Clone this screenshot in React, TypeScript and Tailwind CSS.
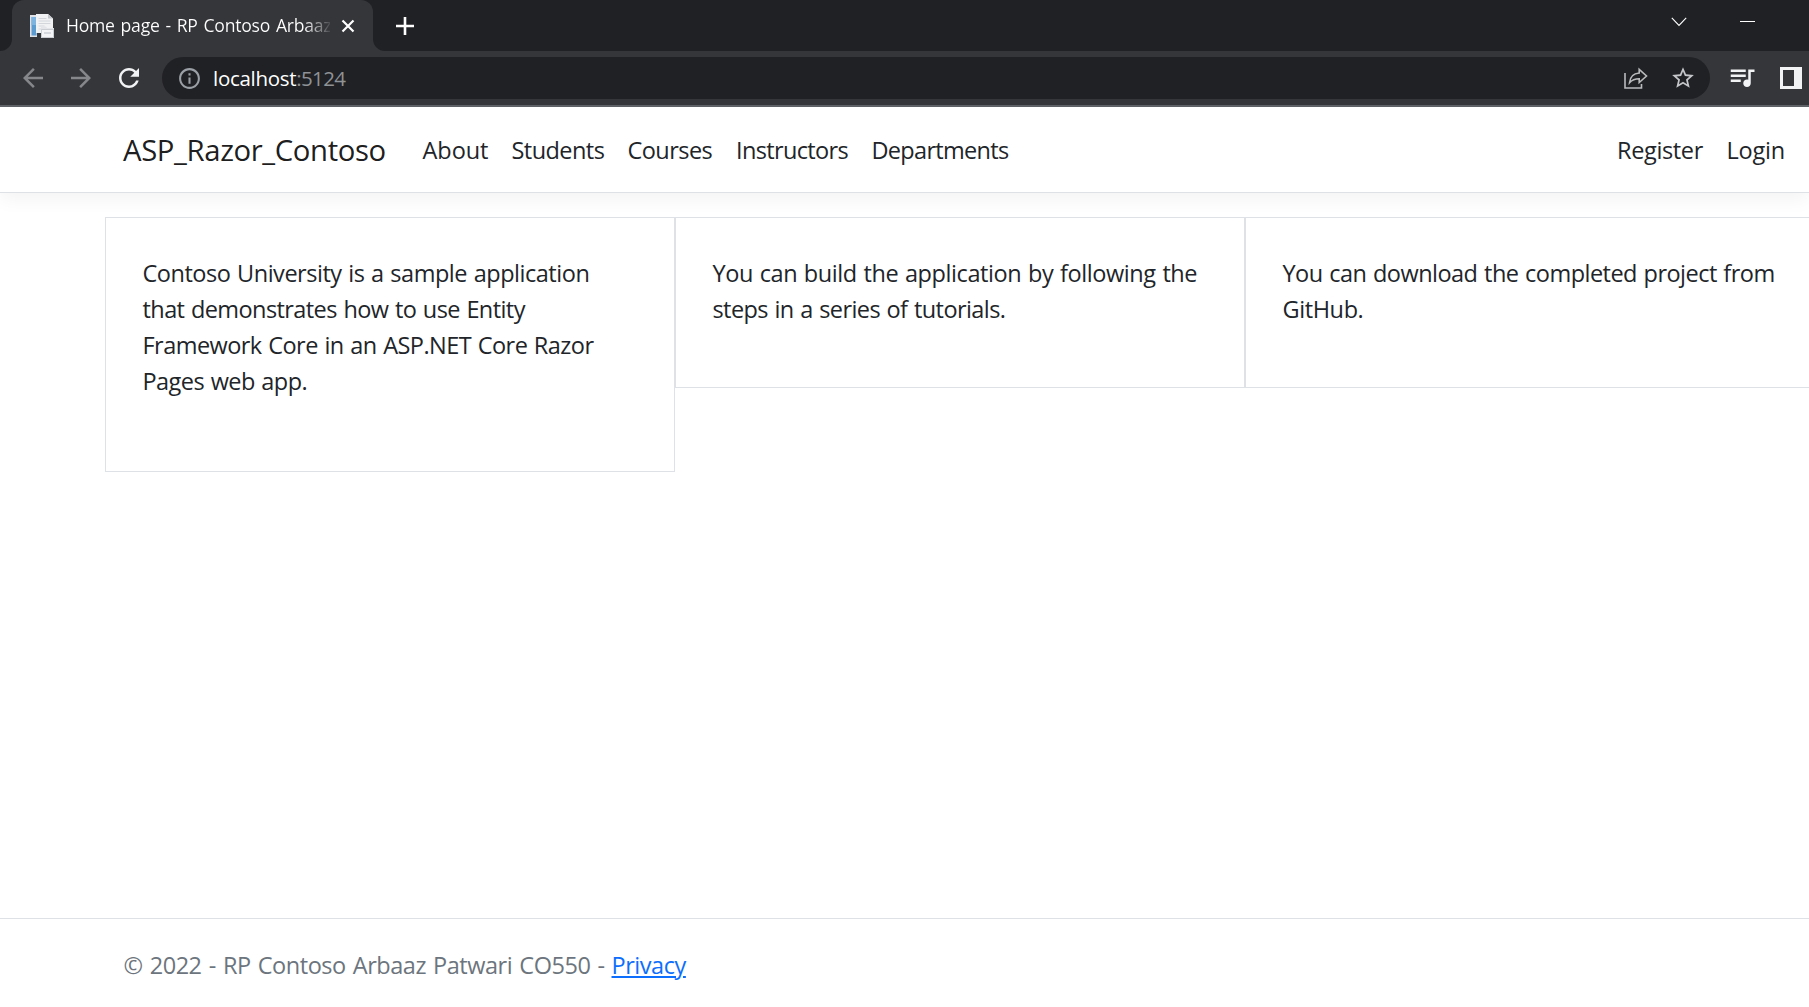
import type { ReactNode } from 'react';

type GlyphProps = { d: string; className: string };

function Glyph({ d, className }: GlyphProps) {
  return (
    <svg viewBox="0 0 24 24" fill="currentColor" className={`shrink-0 ${className}`}>
      <path d={d} />
    </svg>
  );
}

const glyphs = {
  back: 'M20 11H7.83l5.59-5.59L12 4l-8 8 8 8 1.41-1.41L7.83 13H20v-2z',
  forward: 'M12 4l-1.41 1.41L16.17 11H4v2h12.17l-5.58 5.59L12 20l8-8z',
  reload:
    'M17.65 6.35C16.2 4.9 14.21 4 12 4c-4.42 0-7.99 3.58-7.99 8s3.57 8 7.99 8c3.73 0 6.84-2.55 7.73-6h-2.08c-.82 2.33-3.04 4-5.65 4-3.31 0-6-2.69-6-6s2.69-6 6-6c1.66 0 3.14.69 4.22 1.78L13 11h7V4l-2.35 2.35z',
  info: 'M11 7h2v2h-2zm0 4h2v6h-2zm1-9C6.48 2 2 6.48 2 12s4.48 10 10 10 10-4.48 10-10S17.52 2 12 2zm0 18c-4.41 0-8-3.59-8-8s3.59-8 8-8 8 3.59 8 8-3.59 8-8 8z',
  star: 'M22 9.24l-7.19-.62L12 2 9.19 8.63 2 9.24l5.46 4.73L5.82 21 12 17.27 18.18 21l-1.63-7.03L22 9.24zM12 15.4l-3.76 2.27 1-4.28-3.32-2.88 4.38-.38L12 6.1l1.71 4.04 4.38.38-3.32 2.88 1 4.28L12 15.4z',
  queue:
    'M15 6H3v2h12V6zm0 4H3v2h12v-2zM3 16h8v-2H3v2zM17 6v8.18c-.31-.11-.65-.18-1-.18-1.66 0-3 1.34-3 3s1.34 3 3 3 3-1.34 3-3V8h3V6h-5z',
};

function Favicon() {
  return (
    <svg viewBox="0 0 24 24" className="size-6 shrink-0">
      <path d="M0 1h7v22H0z" fill="#dfe3e8" />
      <path d="M1.5 3h5v18.5h-5z" fill="#5b9bd0" />
      <path d="M1.5 3h5v8h-5z" fill="#7db4df" />
      <path d="M6 0h12l5 4.500V19H6z" fill="#f1f2f4" />
      <path d="M18 0l5 4.500h-5z" fill="#c4c7cc" />
      <path d="M8.500 4.500h8M8.500 7h12M8.500 9.500h12M8.500 12h6M8.500 15h3" stroke="#d3d7dc" strokeWidth="1" />
      <path d="M11 12.500h5l1 1.500h7v10H11z" fill="#e3e5e9" />
      <path d="M11.500 15.500h12v8h-12z" fill="#f3f4f6" stroke="#c1c5cb" strokeWidth=".8" />
      <path d="M14 18h7v2h-7z" fill="#d5d8dd" />
    </svg>
  );
}

function TabStrip() {
  return (
    <div className="flex h-[51px] bg-[#202124]">
      <div className="w-3 self-end bg-[#35363a]">
        <div className="h-3 rounded-br-xl bg-[#202124]" />
      </div>
      <div className="flex w-[361px] items-center rounded-t-xl bg-[#35363a] pl-[18px]">
        <Favicon />
        <span className="-mt-px ml-3 w-[264px] overflow-hidden bg-linear-to-r from-white from-90% to-white/10 bg-clip-text text-[17.6px] leading-6 tracking-[-0.24px] [word-spacing:1.5px] whitespace-nowrap text-transparent">
          Home page - RP Contoso Arbaaz
        </span>
        <svg viewBox="0 0 14 14" className="ml-[11px] size-[14px]" stroke="#fff" strokeWidth="2.200">
          <path d="M1.500 1.500l11 11M12.500 1.500l-11 11" />
        </svg>
      </div>
      <div className="w-3 self-end bg-[#35363a]">
        <div className="h-3 rounded-bl-xl bg-[#202124]" />
      </div>
      <svg viewBox="0 0 18 18" className="ml-[11px] size-[18px] self-center" stroke="#fff" strokeWidth="2.600">
        <path d="M9 0v18M0 9h18" />
      </svg>
      <svg viewBox="0 0 16 10" className="mt-[17px] mr-[53px] ml-auto h-[10px] w-4" fill="none" stroke="#fff" strokeWidth="1.100">
        <path d="M.8.800L8 8.500 15.200.8" />
      </svg>
      <div className="mt-[21px] mr-[54px] h-px w-[15px] bg-white" />
    </div>
  );
}

function Toolbar() {
  return (
    <div className="flex h-[56px] items-center border-b-2 border-[#5f6368] bg-[#35363a] pl-[18px]">
      <div className="flex gap-[18px]">
        <Glyph d={glyphs.back} className="size-[30px] text-[#86878a]" />
        <Glyph d={glyphs.forward} className="size-[30px] text-[#86878a]" />
        <Glyph d={glyphs.reload} className="size-[30px] text-[#f1f3f4]" />
      </div>
      <div className="ml-[18px] flex h-[42px] w-[1548px] items-center rounded-full bg-[#202124] pr-[14px] pl-[15px]">
        <Glyph d={glyphs.info} className="size-[25px] text-[#9aa0a6]" />
        <span className="ml-[11px] text-[20.5px] leading-7 tracking-[-0.3px] text-white">localhost</span>
        <span className="flex-1 text-[20.5px] leading-7 tracking-[-0.6px] text-[#8f9296]">:5124</span>
        <svg viewBox="0 0 25 24" className="h-6 w-[25px]" fill="none" stroke="#b9bbbd" strokeWidth="1.600">
          <path d="M2 7v15h16.500v-4" />
          <path d="M16.200 3.300l7.300 6.700-7.300 6.500v-3.700c-4.200 0-7.200 1.200-9.700 4 .5-5.300 3.500-9.300 9.700-9.800z" />
        </svg>
        <Glyph d={glyphs.star} className="ml-[22px] size-[26px] text-[#c4c6c9]" />
      </div>
      <Glyph d={glyphs.queue} className="-mt-[2px] ml-[17px] size-[30px] text-[#f1f3f4]" />
      <svg viewBox="0 0 22 22" className="ml-[23px] size-[22px]">
        <path d="M0 0h22v22H0z" fill="#f1f3f4" />
        <path d="M3 3h11v16H3z" fill="#35363a" />
      </svg>
    </div>
  );
}

const links = [
  { label: 'About', box: 'w-[89px] tracking-[-0.05px]' },
  { label: 'Students', box: 'w-[116px] tracking-[-0.55px]' },
  { label: 'Courses', box: 'w-[108.500px] tracking-[-0.55px]' },
  { label: 'Instructors', box: 'w-[135.500px] tracking-[-0.65px]' },
  { label: 'Departments', box: 'tracking-[-0.7px]' },
];

function NavBar() {
  return (
    <nav className="flex h-[86px] items-center border-b border-[#dee2e6] bg-white pt-0.5 pl-[123px] text-[23.5px] text-[#212529] shadow-[0_6px_18px_rgba(0,0,0,0.05)]">
      <a className="w-[299.500px] text-[29.3px] tracking-[-0.38px] text-black/90">ASP_Razor_Contoso</a>
      {links.map((link) => (
        <a key={link.label} className={link.box}>
          {link.label}
        </a>
      ))}
      <a className="ml-auto w-[109.500px] tracking-[-0.35px]">Register</a>
      <a className="w-[82.500px] tracking-[-0.2px]">Login</a>
    </nav>
  );
}

function Card({ className, children }: { className: string; children: ReactNode }) {
  return (
    <section
      className={`w-[570px] shrink-0 border border-[#dee2e6] pt-[37px] pl-[36.500px] [word-spacing:1px] whitespace-nowrap ${className}`}
    >
      {children}
    </section>
  );
}

export default function App() {
  return (
    <div className="flex h-[1007px] w-[1809px] flex-col overflow-hidden bg-white font-['Open_Sans','Noto_Sans',sans-serif]">
      <TabStrip />
      <Toolbar />
      <NavBar />
      <main className="flex flex-1 items-start pt-6 pl-[105px] text-[23.5px] leading-9 text-[#212529]">
        <Card className="h-[255px]">
          <p className="tracking-[-0.47px]">Contoso University is a sample application</p>
          <p className="tracking-[-0.58px]">that demonstrates how to use Entity</p>
          <p className="tracking-[-0.54px]">Framework Core in an ASP.NET Core Razor</p>
          <p className="tracking-[-0.55px]">Pages web app.</p>
        </Card>
        <Card className="h-[171px]">
          <p className="tracking-[-0.41px]">You can build the application by following the</p>
          <p className="tracking-[-0.58px]">steps in a series of tutorials.</p>
        </Card>
        <Card className="h-[171px]">
          <p className="tracking-[-0.52px]">You can download the completed project from</p>
          <p className="tracking-[-0.4px]">GitHub.</p>
        </Card>
      </main>
      <footer className="flex h-[89px] border-t border-[#dee2e6] pt-[28px] pl-[123.500px] text-[23.5px] leading-9 text-[#6c757d]">
        <span className="w-[488px] tracking-[-0.47px] [word-spacing:1.5px]">© 2022 - RP Contoso Arbaaz Patwari CO550 -</span>
        <a className="tracking-[-0.45px] text-[#0d6efd] underline decoration-2 underline-offset-2">Privacy</a>
      </footer>
    </div>
  );
}
